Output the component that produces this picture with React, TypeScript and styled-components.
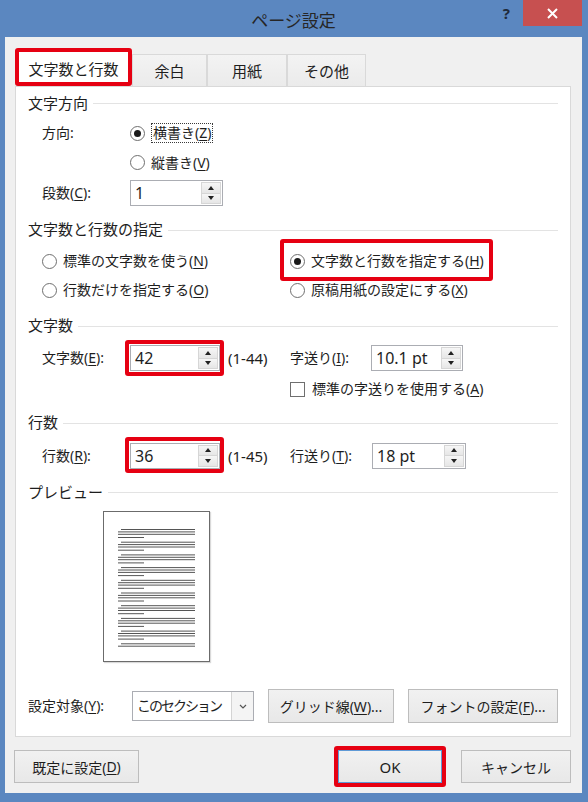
import React from "react";
import styled, { createGlobalStyle } from "styled-components";

const GlobalStyle = createGlobalStyle`
  html, body {
    margin: 0;
    padding: 0;
    background: #5b87c0;
  }
  * { box-sizing: border-box; }
`;

const RED = "#e60012";

const Window = styled.div`
  width: 588px;
  height: 802px;
  background: #5b87c0;
  display: flex;
  flex-direction: column;
  padding: 0 6px 9px 5px;
  font-family: "Noto Sans", "Noto Sans CJK JP", sans-serif;
  font-size: 14px;
  line-height: 20px;
  color: #1e1e1e;
`;

const TitleBar = styled.div`
  height: 37px;
  display: grid;
  grid-template-columns: 1fr auto 1fr;
  align-items: start;
`;

const Title = styled.div`
  grid-column: 2;
  padding-top: 9px;
  font-size: 17px;
  line-height: 24px;
  color: #262626;
`;

const Controls = styled.div`
  grid-column: 3;
  display: flex;
  justify-content: flex-end;
  align-items: flex-start;
`;

const Help = styled.span`
  padding-top: 3px;
  margin-right: 13px;
  font-size: 15px;
  font-weight: bold;
  line-height: 20px;
  color: #1f2a3a;
`;

const Close = styled.div`
  width: 59px;
  height: 26px;
  background: #c75050;
  display: flex;
  align-items: center;
  justify-content: center;
`;

const Body = styled.div`
  flex: 1;
  display: flex;
  flex-direction: column;
  background: #f0f0f0;
  padding: 11px 11px 0 10px;
`;

const TabStrip = styled.div`
  display: flex;
  align-items: flex-end;
  height: 38px;
`;

const Tab = styled.div<{ $w: number; $active?: boolean }>`
  width: ${(p) => p.$w}px;
  height: ${(p) => (p.$active ? 38 : 32)}px;
  display: flex;
  align-items: center;
  justify-content: center;
  padding-top: ${(p) => (p.$active ? 4 : 0)}px;
  background: ${(p) => (p.$active ? "#fff" : "linear-gradient(#f3f3f3, #ebebeb)")};
  border: ${(p) => (p.$active ? `4px solid ${RED}` : "1px solid #d9d9d9")};
  border-bottom: ${(p) => (p.$active ? `4px solid ${RED}` : "none")};
  border-radius: ${(p) => (p.$active ? "3px" : "0")};
  font-size: 15px;
`;

const Panel = styled.div`
  width: 556px;
  background: #fff;
  border: 1px solid #d9d9d9;
  padding: 0 12px 10px 12px;
`;

const Header = styled.div<{ $h: number }>`
  display: flex;
  align-items: center;
  gap: 5px;
  height: ${(p) => p.$h}px;
  font-size: 15px;
  &::after {
    content: "";
    flex: 1;
    height: 1px;
    margin-top: 2px;
    background: #e3e3e3;
  }
`;

const Row = styled.div<{ $h: number; $indent?: number }>`
  display: flex;
  align-items: center;
  height: ${(p) => p.$h}px;
  padding-left: ${(p) => p.$indent ?? 14}px;
`;

const SettingsRow = styled(Row)`
  margin-top: 24px;
`;

const Cell = styled.div<{ $w: number }>`
  flex: none;
  width: ${(p) => p.$w}px;
  display: flex;
  align-items: center;
`;

const Key = styled.span`
  text-decoration: underline;
  text-underline-offset: 2px;
`;

const RadioItem = styled.span`
  position: relative;
  display: inline-flex;
  align-items: center;
  height: 20px;
  white-space: nowrap;
`;

const Circle = styled.span<{ $on?: boolean }>`
  width: 15px;
  height: 15px;
  margin-right: 6px;
  border-radius: 50%;
  border: 1px solid #6f6f6f;
  background: #fff;
  display: inline-flex;
  align-items: center;
  justify-content: center;
  &::after {
    content: "";
    width: 7px;
    height: 7px;
    border-radius: 50%;
    background: ${(p) => (p.$on ? "#1a1a1a" : "transparent")};
  }
`;

const Focus = styled.span`
  border: 1px dotted #3a3a3a;
  padding: 0 1px;
  line-height: 18px;
`;

const Box = styled.span`
  width: 15px;
  height: 15px;
  margin-right: 7px;
  border: 1px solid #6f6f6f;
  background: #fff;
`;

const Mark = styled.span<{ $inset: string }>`
  position: relative;
  display: inline-flex;
  &::before {
    content: "";
    position: absolute;
    inset: ${(p) => p.$inset};
    border: 4px solid ${RED};
    border-radius: 3px;
    pointer-events: none;
    z-index: 1;
  }
`;

const SpinBox = styled.div<{ $w: number }>`
  width: ${(p) => p.$w}px;
  height: 26px;
  display: flex;
  border: 1px solid #abadb3;
  background: #fff;
`;

const SpinValue = styled.div`
  flex: 1;
  padding-left: 4px;
  font-size: 16px;
  line-height: 24px;
`;

const SpinButtons = styled.div`
  width: 20px;
  margin: 1px 1px 1px 0;
  display: flex;
  flex-direction: column;
  border: 1px solid #d6d6d6;
`;

const SpinHalf = styled.div<{ $down?: boolean }>`
  flex: 1;
  display: flex;
  align-items: center;
  justify-content: center;
  background: linear-gradient(#f6f6f6, #e6e6e6);
  border-top: ${(p) => (p.$down ? "1px solid #d6d6d6" : "none")};
  &::after {
    content: "";
    border-left: 3px solid transparent;
    border-right: 3px solid transparent;
    ${(p) => (p.$down ? "border-top: 4px solid #222;" : "border-bottom: 4px solid #222;")}
  }
`;

const Range = styled.span`
  width: 62px;
  margin-left: 8px;
  font-size: 15px;
`;

const PreviewArea = styled.div`
  padding-left: 75px;
`;

const Page = styled.div`
  width: 107px;
  height: 151px;
  background: #fff;
  border: 1px solid #6b6b6b;
  box-shadow: 1px 1px 1px rgba(0, 0, 0, 0.15);
`;

const Select = styled.div`
  width: 122px;
  height: 30px;
  display: flex;
  border: 1px solid #abadb3;
  background: #fff;
`;

const SelectText = styled.div`
  flex: 1;
  padding-left: 4px;
  line-height: 28px;
  font-size: 14px;
  letter-spacing: -2px;
  white-space: nowrap;
  overflow: hidden;
`;

const SelectArrow = styled.div`
  width: 22px;
  display: flex;
  align-items: center;
  justify-content: center;
  border-left: 1px solid #d4d4d4;
  background: #f4f4f4;
`;

const Button = styled.button<{ $w: number; $h?: number; $ml?: number; $default?: boolean }>`
  width: ${(p) => p.$w}px;
  height: ${(p) => p.$h ?? 33}px;
  margin-left: ${(p) => p.$ml ?? 0}px;
  padding: 0;
  display: flex;
  align-items: center;
  justify-content: center;
  font-family: inherit;
  font-size: ${(p) => (p.$default ? 15 : 14)}px;
  color: #1e1e1e;
  background: linear-gradient(#f1f1f1, #e8e8e8);
  border: 1px solid ${(p) => (p.$default ? "#5f9ad6" : "#bdbdbd")};
  white-space: nowrap;
`;

const Footer = styled.div`
  height: 56px;
  padding-top: 3px;
  display: flex;
  align-items: center;
`;

const Spacer = styled.div`
  flex: 1;
`;

const Spin = ({ value, w }: { value: string; w: number }) => (
  <SpinBox $w={w}>
    <SpinValue>{value}</SpinValue>
    <SpinButtons>
      <SpinHalf />
      <SpinHalf $down />
    </SpinButtons>
  </SpinBox>
);

const PreviewLines = () => {
  const lines: { x1: number; x2: number; y: number }[] = [];
  for (let g = 0; g < 10; g++) {
    const top = 17.5 + g * 12.7;
    lines.push({ x1: 17, x2: 91, y: top });
    lines.push({ x1: 14, x2: 91, y: top + 2.4 });
    if (g < 9) {
      lines.push({ x1: 14, x2: 91, y: top + 4.8 });
      lines.push({ x1: 14, x2: 40, y: top + 8 });
    }
  }
  return (
    <svg width="105" height="149" viewBox="0 0 105 149">
      {lines.map((l, i) => (
        <line key={i} x1={l.x1} x2={l.x2} y1={l.y} y2={l.y} stroke="#555" strokeWidth="1" />
      ))}
    </svg>
  );
};

export default function App() {
  return (
    <>
      <GlobalStyle />
      <Window>
        <TitleBar>
          <Title>ページ設定</Title>
          <Controls>
            <Help>?</Help>
            <Close>
              <svg width="11" height="11" viewBox="0 0 11 11">
                <path d="M1 1L10 10M10 1L1 10" stroke="#fff" strokeWidth="2" />
              </svg>
            </Close>
          </Controls>
        </TitleBar>

        <Body>
          <TabStrip>
            <Tab $w={117} $active>文字数と行数</Tab>
            <Tab $w={75}>余白</Tab>
            <Tab $w={80}>用紙</Tab>
            <Tab $w={79}>その他</Tab>
          </TabStrip>

          <Panel>
            <Header $h={31}>文字方向</Header>
            <Row $h={30}>
              <Cell $w={88}>方向:</Cell>
              <RadioItem>
                <Circle $on />
                <Focus>
                  横書き(<Key>Z</Key>)
                </Focus>
              </RadioItem>
            </Row>
            <Row $h={29} $indent={102}>
              <RadioItem>
                <Circle />
                縦書き(<Key>V</Key>)
              </RadioItem>
            </Row>
            <Row $h={32}>
              <Cell $w={88}>
                段数(<Key>C</Key>):
              </Cell>
              <Spin value="1" w={93} />
            </Row>

            <Header $h={40}>文字数と行数の指定</Header>
            <Row $h={24}>
              <Cell $w={248}>
                <RadioItem>
                  <Circle />
                  標準の文字数を使う(<Key>N</Key>)
                </RadioItem>
              </Cell>
              <Mark $inset="-12px -9px -10px -10px">
                <RadioItem>
                  <Circle $on />
                  文字数と行数を指定する(<Key>H</Key>)
                </RadioItem>
              </Mark>
            </Row>
            <Row $h={34}>
              <Cell $w={248}>
                <RadioItem>
                  <Circle />
                  行数だけを指定する(<Key>O</Key>)
                </RadioItem>
              </Cell>
              <RadioItem>
                <Circle />
                原稿用紙の設定にする(<Key>X</Key>)
              </RadioItem>
            </Row>

            <Header $h={36}>文字数</Header>
            <Row $h={30}>
              <Cell $w={88}>
                文字数(<Key>E</Key>):
              </Cell>
              <Mark $inset="-5px -4px -5px -5px">
                <Spin value="42" w={90} />
              </Mark>
              <Range>(1-44)</Range>
              <Cell $w={81}>
                字送り(<Key>I</Key>):
              </Cell>
              <Spin value="10.1 pt" w={92} />
            </Row>
            <Row $h={32} $indent={262}>
              <Box />
              標準の字送りを使用する(<Key>A</Key>)
            </Row>

            <Header $h={34}>行数</Header>
            <Row $h={33}>
              <Cell $w={88}>
                行数(<Key>R</Key>):
              </Cell>
              <Mark $inset="-6px -4px -4px -5px">
                <Spin value="36" w={90} />
              </Mark>
              <Range>(1-45)</Range>
              <Cell $w={82}>
                行送り(<Key>T</Key>):
              </Cell>
              <Spin value="18 pt" w={94} />
            </Row>

            <Header $h={39}>プレビュー</Header>
            <PreviewArea>
              <Page>
                <PreviewLines />
              </Page>
            </PreviewArea>

            <SettingsRow $h={40} $indent={0}>
              <Cell $w={104}>
                設定対象(<Key>Y</Key>):
              </Cell>
              <Select>
                <SelectText>このセクション</SelectText>
                <SelectArrow>
                  <svg width="8" height="5" viewBox="0 0 8 5">
                    <path d="M1 1L4 4L7 1" stroke="#555" strokeWidth="1.2" fill="none" />
                  </svg>
                </SelectArrow>
              </Select>
              <Button $w={126} $h={34} $ml={14}>
                グリッド線(<Key>W</Key>)...
              </Button>
              <Button $w={150} $h={34} $ml={14}>
                フォントの設定(<Key>F</Key>)...
              </Button>
            </SettingsRow>
          </Panel>

          <Footer>
            <Button $w={125} $ml={-1}>
              既定に設定(<Key>D</Key>)
            </Button>
            <Spacer />
            <Mark $inset="-4px">
              <Button $w={104} $default>
                OK
              </Button>
            </Mark>
            <Button $w={110} $ml={19}>
              キャンセル
            </Button>
          </Footer>
        </Body>
      </Window>
    </>
  );
}
